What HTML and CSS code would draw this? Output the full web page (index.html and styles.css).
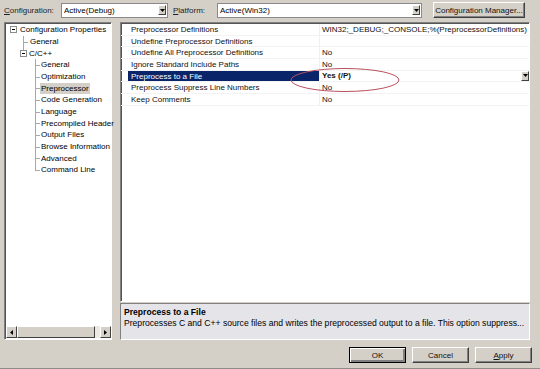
FILE: index.html
```html
<!DOCTYPE html>
<html>
    <head>
        <meta charset="utf-8">
        <title>Property Pages</title>
        <link rel="stylesheet" href="styles.css">
    </head>
    <body>
        <div class="dialog">

            <div class="toolbar">
                <span class="lbl lbl-config"><u>C</u>onfiguration:</span>
                <div class="combo combo-config">
                    <span class="combo-text">Active(Debug)</span>
                    <span class="drop"><svg width="5" height="3" viewBox="0 0 5 3"><path d="M0 0h5L2.5 3z" fill="#000"/></svg></span>
                </div>
                <span class="lbl lbl-platform"><u>P</u>latform:</span>
                <div class="combo combo-platform">
                    <span class="combo-text">Active(Win32)</span>
                    <span class="drop"><svg width="5" height="3" viewBox="0 0 5 3"><path d="M0 0h5L2.5 3z" fill="#000"/></svg></span>
                </div>
                <button class="btn btn-manager">Configuration Manager...</button>
            </div>

            <div class="main">
                <div class="tree">
                    <div class="tree-body">
                        <div class="tree-row root">
                            <span class="exp"><svg width="7" height="7" viewBox="0 0 7 7"><rect x="0.5" y="0.5" width="6" height="6" fill="#fff" stroke="#8c8c8c"/><path d="M2 3.5h3" stroke="#000"/></svg></span>
                            <span class="tree-label">Configuration Properties</span>
                        </div>
                        <div class="tree-group g1">
                            <div class="tree-row leaf"><span class="tree-label">General</span></div>
                            <div class="tree-row node">
                                <span class="exp"><svg width="7" height="7" viewBox="0 0 7 7"><rect x="0.5" y="0.5" width="6" height="6" fill="#fff" stroke="#8c8c8c"/><path d="M2 3.5h3" stroke="#000"/></svg></span>
                                <span class="tree-label">C/C++</span>
                            </div>
                        </div>
                        <div class="tree-group g2">
                            <div class="tree-row leaf"><span class="tree-label">General</span></div>
                            <div class="tree-row leaf"><span class="tree-label">Optimization</span></div>
                            <div class="tree-row leaf"><span class="tree-label selected">Preprocessor</span></div>
                            <div class="tree-row leaf"><span class="tree-label">Code Generation</span></div>
                            <div class="tree-row leaf"><span class="tree-label">Language</span></div>
                            <div class="tree-row leaf"><span class="tree-label">Precompiled Header</span></div>
                            <div class="tree-row leaf"><span class="tree-label">Output Files</span></div>
                            <div class="tree-row leaf"><span class="tree-label">Browse Information</span></div>
                            <div class="tree-row leaf"><span class="tree-label">Advanced</span></div>
                            <div class="tree-row leaf"><span class="tree-label">Command Line</span></div>
                        </div>
                    </div>
                    <div class="hscroll">
                        <span class="sb-btn"><svg width="3" height="5" viewBox="0 0 3 5"><path d="M3 0v5L0 2.5z" fill="#000"/></svg></span>
                        <span class="sb-thumb"></span>
                        <span class="sb-track"></span>
                        <span class="sb-btn"><svg width="3" height="5" viewBox="0 0 3 5"><path d="M0 0v5L3 2.5z" fill="#000"/></svg></span>
                    </div>
                </div>

                <div class="right">
                    <div class="grid">
                        <div class="grid-row">
                            <span class="name">Preprocessor Definitions</span>
                            <span class="value">WIN32;_DEBUG;_CONSOLE;%(PreprocessorDefinitions)</span>
                        </div>
                        <div class="grid-row">
                            <span class="name">Undefine Preprocessor Definitions</span>
                            <span class="value"></span>
                        </div>
                        <div class="grid-row">
                            <span class="name">Undefine All Preprocessor Definitions</span>
                            <span class="value">No</span>
                        </div>
                        <div class="grid-row">
                            <span class="name">Ignore Standard Include Paths</span>
                            <span class="value">No</span>
                        </div>
                        <div class="grid-row active">
                            <span class="name">Preprocess to a File</span>
                            <span class="value"><b>Yes (/P)</b><span class="cell-drop"><svg width="5" height="3" viewBox="0 0 5 3"><path d="M0 0h5L2.5 3z" fill="#000"/></svg></span></span>
                        </div>
                        <div class="grid-row">
                            <span class="name">Preprocess Suppress Line Numbers</span>
                            <span class="value">No</span>
                        </div>
                        <div class="grid-row">
                            <span class="name">Keep Comments</span>
                            <span class="value">No</span>
                        </div>

                        <svg class="mark" width="112" height="28" viewBox="0 0 112 28">
                            <ellipse cx="56" cy="14" rx="54" ry="11.5" fill="none" stroke="#b8505e" stroke-width="1"/>
                        </svg>
                    </div>

                    <div class="desc">
                        <div class="desc-title">Preprocess to a File</div>
                        <div class="desc-text">Preprocesses C and C++ source files and writes the preprocessed output to a file. This option suppress...</div>
                    </div>
                </div>
            </div>

            <div class="footer">
                <button class="btn btn-default">OK</button>
                <button class="btn">Cancel</button>
                <button class="btn"><u>A</u>pply</button>
            </div>

        </div>
    </body>
</html>
```

FILE: styles.css
```css
body {
    margin: 0;
    width: 540px;
    height: 369px;
    overflow: hidden;
    background-color: #d4d0c8; /* classic dialog grey */
    font-family: "Liberation Sans", Arial, sans-serif;
    font-size: 8px;
    color: #000;
}

.dialog {
    height: 368px;
    border-bottom: 1px solid #8e8c88;
}

/* top bar */

.toolbar {
    display: flex;
    align-items: center;
    height: 22px;
    padding-left: 4px;
    box-sizing: border-box;
    padding-bottom: 2px;
}

.lbl {
    color: #222;
}

.lbl-config {
    width: 57px;
}

.lbl-platform {
    width: 44px;
}

.combo {
    display: flex;
    align-items: center;
    height: 15px;
    box-sizing: border-box;
    background-color: #fff;
    border: 1px solid #8a8a8a;
}

.combo-config {
    width: 107px;
    margin-right: 5px;
}

.combo-platform {
    width: 205px;
    margin-right: 11px;
}

.combo-text {
    flex: 1;
    padding-left: 2px;
}

.drop,
.cell-drop {
    display: flex;
    align-items: center;
    justify-content: center;
    width: 8px;
    height: 10px;
    margin-right: 1px;
    box-sizing: border-box;
    background-color: #d4d0c8;
    border: 1px solid;
    border-color: #fff #404040 #404040 #fff;
}

.btn {
    height: 16px;
    padding: 0;
    box-sizing: border-box;
    background-color: #d4d0c8;
    border: 1px solid;
    border-color: #fff #404040 #404040 #fff;
    box-shadow: inset -1px -1px #808080;
    font-family: inherit;
    font-size: 8px;
    color: #111;
}

.btn-manager {
    width: 92px;
}

/* tree + grid */

.main {
    display: flex;
    height: 318px;
}

.tree {
    display: flex;
    flex-direction: column;
    width: 108px;
    margin-left: 4px;
    box-sizing: border-box;
    background-color: #fff;
    border: 1px solid;
    border-color: #808080 #fff #fff #808080;
    box-shadow: inset 1px 1px #555;
}

.tree-body {
    flex: 1;
    padding-top: 1px;
}

.tree-row {
    position: relative;
    display: flex;
    align-items: center;
    height: 11.67px;
    white-space: nowrap;
}

.tree-label {
    padding: 0 1px;
    line-height: 11px;
}

.tree-label.selected {
    background-color: #d4d0c8;
}

.exp {
    display: flex;
    margin-right: 1px;
}

.root {
    padding-left: 5px;
}

.root .exp {
    margin-right: 2px;
}

.tree-group {
    position: relative;
}

.tree-group::before {
    content: "";
    position: absolute;
    top: 0;
    bottom: 6px;
    border-left: 1px solid #a8a8a8;
}

.g1::before {
    left: 18px;
}

.g1 .leaf {
    padding-left: 24px;
}

.g1 .node {
    padding-left: 15px;
}

.g2::before {
    left: 30px;
}

.g2 .leaf {
    padding-left: 35px;
}

.leaf::before {
    content: "";
    position: absolute;
    top: 6px;
    width: 5px;
    border-top: 1px solid #a8a8a8;
}

.g1 .leaf::before {
    left: 18px;
}

.g2 .leaf::before {
    left: 30px;
}

.hscroll {
    display: flex;
    height: 12px;
    margin: 0 0 1px 1px;
    background-color: #ece9e4;
}

.sb-btn {
    display: flex;
    align-items: center;
    justify-content: center;
    width: 11px;
    box-sizing: border-box;
    background-color: #d4d0c8;
    border: 1px solid;
    border-color: #fff #404040 #404040 #fff;
}

.sb-thumb {
    width: 78px;
    box-sizing: border-box;
    background-color: #d4d0c8;
    border: 1px solid;
    border-color: #fff #404040 #404040 #fff;
}

.sb-track {
    flex: 1;
}

.right {
    display: flex;
    flex-direction: column;
    width: 410px;
    margin-left: 8px;
}

.grid {
    position: relative;
    height: 281px;
    padding-top: 1px;
    box-sizing: border-box;
    background-color: #fff;
    border: 1px solid;
    border-color: #808080 #fff #fff #808080;
    box-shadow: inset 1px 1px #555;
}

.grid-row {
    display: flex;
    height: 11.67px;
    padding-left: 7px;
    border-bottom: 1px solid #f3f3f3;
    box-sizing: border-box;
    line-height: 11px;
    white-space: nowrap;
}

.name {
    width: 188px;
    padding-left: 3px;
    border-right: 1px solid #f0f0f0;
    color: #111;
}

.value {
    display: flex;
    flex: 1;
    align-items: center;
    padding-left: 2px;
    color: #111;
}

.value b {
    flex: 1;
}

.active .name {
    background-color: #0a246a;
    color: #fff;
}

.cell-drop {
    margin-right: 0;
}

.mark {
    position: absolute;
    left: 168px;
    top: 43px;
}

.desc {
    height: 37px;
    margin-top: 1px;
    padding: 3px 3px 0;
    box-sizing: border-box;
    background-color: #e4e4e9;
    border: 1px solid;
    border-color: #808080 #fff #fff #808080;
    font-size: 8.6px;
    line-height: 10.5px;
    white-space: nowrap;
    overflow: hidden;
}

.desc-title {
    font-weight: bold;
}

/* buttons */

.footer {
    display: flex;
    justify-content: flex-end;
    gap: 6px;
    margin-top: 7px;
    padding-right: 8px;
}

.footer .btn {
    width: 57px;
    height: 16px;
}

.btn-default {
    border-color: #000;
    box-shadow: inset 1px 1px #fff, inset -2px -2px #808080;
}
```
